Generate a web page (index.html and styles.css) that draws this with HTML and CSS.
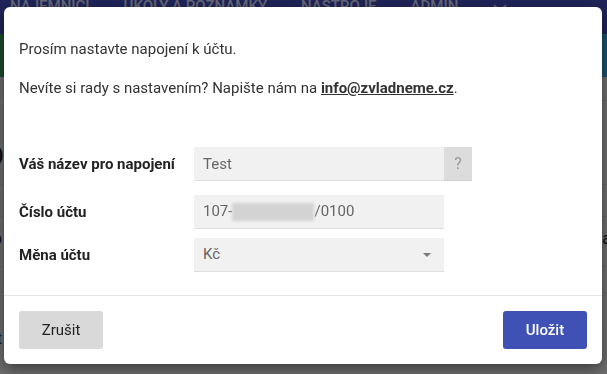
FILE: index.html
```html
<!DOCTYPE html>
<html lang="cs">
<head>
    <meta charset="UTF-8">
    <meta name="viewport" content="width=device-width, initial-scale=1.0">
    <title>Napojení účtu</title>
    <link rel="stylesheet" href="styles.css">
</head>
<body>
    <div class="page">
        <div class="navbar">
            <ul class="nav">
                <li>Nájemníci</li>
                <li>Úkoly a poznámky</li>
                <li>Nástroje</li>
                <li>Admin</li>
                <li class="nav-more">
                    <svg width="14" height="10" viewBox="0 0 14 10"><path d="M1 2 L7 8 L13 2" fill="none" stroke="currentColor" stroke-width="1.6"/></svg>
                </li>
            </ul>
        </div>
        <div class="band"></div>
        <div class="content">
            <div class="content-row first"></div>
            <div class="content-row title">O</div>
            <div class="content-row thin"></div>
            <div class="content-row text"><span>p</span><span>a</span></div>
            <div class="content-row"></div>
            <div class="content-row link">t</div>
        </div>
    </div>

    <div class="backdrop">
        <div class="modal">
            <div class="modal-body">
                <p>Prosím nastavte napojení k účtu.</p>
                <p>Nevíte si rady s nastavením? Napište nám na <a href="#">info@zvladneme.cz</a>.</p>

                <form class="form">
                    <div class="form-row row-name">
                        <label for="name">Váš název pro napojení</label>
                        <div class="input-group">
                            <input type="text" id="name" value="Test">
                            <span class="help">?</span>
                        </div>
                    </div>
                    <div class="form-row row-account">
                        <label>Číslo účtu</label>
                        <div class="field">107-<span class="masked"></span>/0100</div>
                    </div>
                    <div class="form-row">
                        <label>Měna účtu</label>
                        <div class="field select">Kč<span class="caret"></span></div>
                    </div>
                </form>
            </div>
            <div class="modal-footer">
                <button class="btn btn-cancel">Zrušit</button>
                <button class="btn btn-save">Uložit</button>
            </div>
        </div>
    </div>
</body>
</html>
```

FILE: styles.css
```css
* {
    margin: 0;
    padding: 0;
    box-sizing: border-box;
}

body {
    font-family: Roboto, 'Liberation Sans', sans-serif;
    background: #e0e0e0;
    height: 374px;
    overflow: hidden;
}

/* page behind the dialog */
.navbar {
    height: 34px;
    background: #3f4ab4;
    overflow: hidden;
}

.nav {
    list-style: none;
    display: flex;
    margin-top: -2px;
    padding-left: 10px;
    color: rgba(255, 255, 255, 0.75);
    font-size: 15px;
    line-height: 17px;
    font-weight: 500;
    text-transform: uppercase;
}

.nav li {
    margin-right: 34px;
}

.nav-more {
    padding-top: 2px;
    margin-left: 1px;
}

.band {
    height: 43px;
    background: linear-gradient(90deg, #3b9a56 0%, #2f8fa8 50%, #36a6dc 100%);
}

.content {
    background: #dedede;
}

.content-row {
    height: 26px;
    border-bottom: 1px solid #d0d0d0;
    color: #1a1a1a;
    font-size: 16px;
}

.content-row.first {
    border-bottom-color: #f0f0f0;
}

.content-row.title {
    height: 82px;
    padding-top: 38px;
    font-size: 26px;
    margin-left: -14px;
}

.content-row.thin {
    height: 32px;
}

.content-row.text {
    height: 50px;
    display: flex;
    justify-content: space-between;
    padding-top: 12px;
    margin-left: -7px;
    margin-right: -4px;
}

.content-row.link {
    border: none;
    color: #2c4a9a;
    margin-left: -3px;
    padding-top: 36px;
}

/* dialog */
.backdrop {
    position: fixed;
    inset: 0;
    background: rgba(0, 0, 0, 0.5);
}

.modal {
    position: absolute;
    left: 4px;
    top: 7px;
    width: 598px;
    height: 357px;
    background: #fff;
    border-radius: 6px;
    box-shadow: 0 5px 15px rgba(0, 0, 0, 0.5);
    display: flex;
    flex-direction: column;
}

.modal-body {
    flex: 1;
    padding: 32px 15px 0;
    color: #333;
    font-size: 15px;
    line-height: 21px;
}

.modal-body p {
    margin-bottom: 18px;
}

.modal-body a {
    color: #333;
    font-weight: 700;
}

.form {
    margin-top: 48px;
}

.form-row {
    display: flex;
    align-items: center;
    margin-bottom: 9px;
}

.form-row.row-name {
    margin-bottom: 14px;
}

.form-row label {
    width: 175px;
    font-size: 15px;
    font-weight: 700;
    color: #222;
}

.input-group {
    display: flex;
}

.input-group input,
.field {
    width: 250px;
    height: 34px;
    background: #f1f1f1;
    border: none;
    border-bottom: 1px solid #dedede;
    padding: 0 9px;
    font-family: inherit;
    font-size: 15px;
    color: #666;
    outline: none;
}

.field {
    display: flex;
    align-items: center;
}

.help {
    width: 28px;
    height: 34px;
    background: #dcdcdc;
    border-bottom: 1px solid #d0d0d0;
    color: #999;
    font-size: 16px;
    display: flex;
    align-items: center;
    justify-content: center;
}

.masked {
    display: inline-block;
    width: 82px;
    height: 18px;
    background: #d3d3d3;
    filter: blur(1.5px);
}

.select {
    position: relative;
}

.caret {
    position: absolute;
    right: 13px;
    top: 15px;
    border-left: 4px solid transparent;
    border-right: 4px solid transparent;
    border-top: 4px solid #7a7a7a;
}

.modal-footer {
    border-top: 1px solid #e5e5e5;
    padding: 15px 15px 15px;
    display: flex;
    justify-content: space-between;
}

.btn {
    width: 84px;
    height: 38px;
    border: none;
    border-radius: 3px;
    font-family: inherit;
    font-size: 15px;
    cursor: pointer;
}

.btn-cancel {
    background: #d9d9d9;
    color: #222;
}

.btn-save {
    background: #3f51b5;
    color: #fff;
    font-weight: 500;
}
```
